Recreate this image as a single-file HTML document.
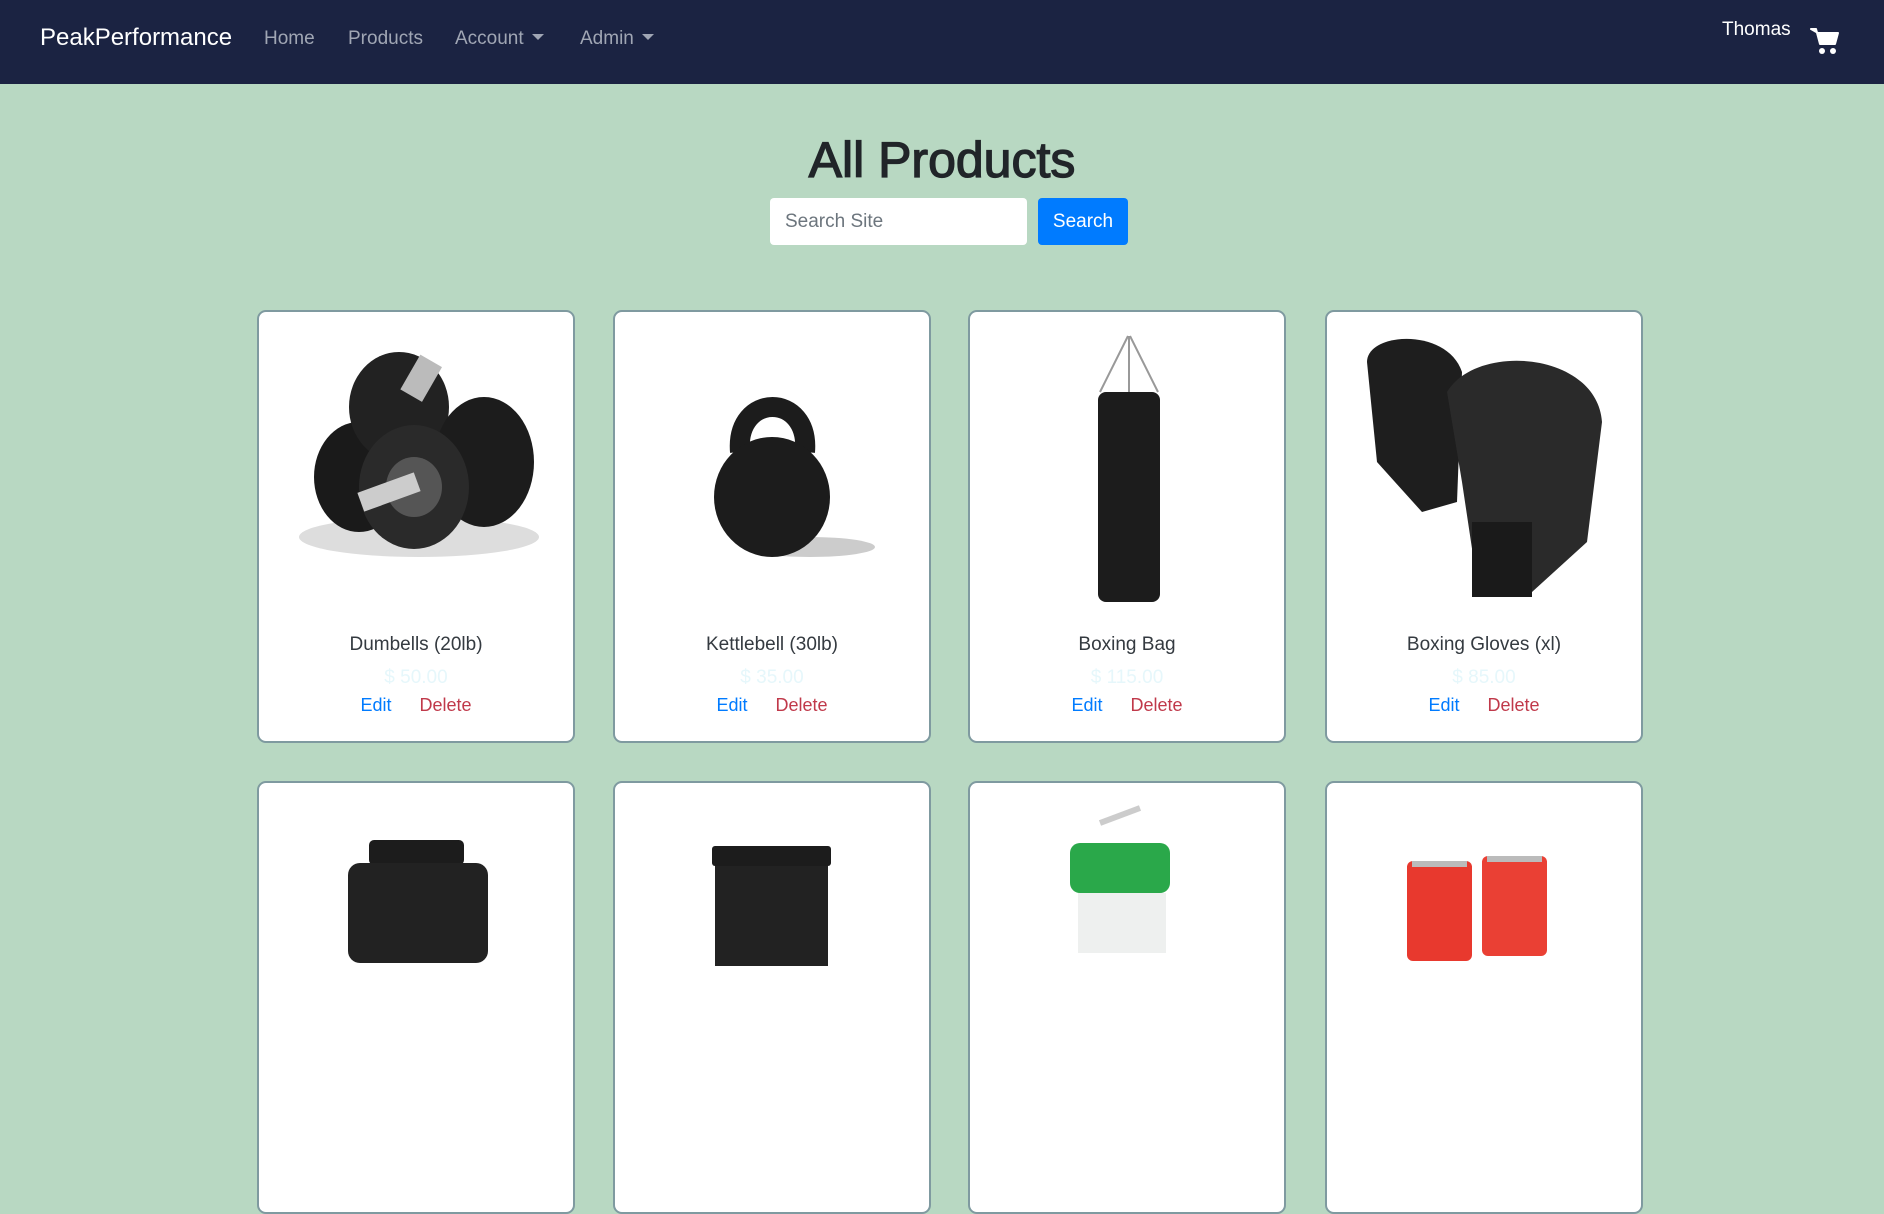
<!DOCTYPE html>
<html><head><meta charset="utf-8"><style>
*{box-sizing:border-box;margin:0;padding:0}
body{width:1884px;height:902px;overflow:hidden;background:#b8d8c2;font-family:"Liberation Sans",sans-serif;position:relative}
nav{position:absolute;left:0;top:0;width:1884px;height:84px;background:#1b2342}
.brand{position:absolute;left:40px;top:24px;font-size:24px;color:#fff}
.nl{position:absolute;top:28px;font-size:19px;color:#a0a6b4}
.car{display:inline-block;border-top:6px solid #a0a6b4;border-left:6px solid transparent;border-right:6px solid transparent;margin-left:8px;vertical-align:4px}
.th{position:absolute;left:1722px;top:19px;font-size:19px;color:#fff}
h1{position:absolute;left:0;width:1884px;top:130px;text-align:center;font-size:50px;font-weight:normal;-webkit-text-stroke:1.3px #212529;color:#212529;line-height:60px}
.inp{position:absolute;left:770px;top:198px;width:257px;height:47px;background:#fff;border-radius:4px;color:#6c757d;font-size:19px;padding:13px 15px}
.btn{position:absolute;left:1038px;top:198px;width:90px;height:47px;background:#007bff;border-radius:4px;color:#fff;font-size:19px;text-align:center;line-height:47px}
.card{position:absolute;width:318px;height:433px;background:#fff;border:2px solid #7f9aa0;border-radius:9px;overflow:hidden}
.card svg{position:absolute;left:0;top:0}
.nm{position:absolute;top:322px;width:100%;text-align:center;font-size:19px;color:#343a40}
.pr{position:absolute;top:355px;width:100%;text-align:center;font-size:19px;color:#e6f7fb}
.ed{position:absolute;top:383px;width:100%;text-align:center;font-size:18px}
.ed b{font-weight:normal;color:#007bff;margin-right:28px}.ed i{font-style:normal;color:#c0394a}
</style></head><body>
<nav>
<div class="brand">PeakPerformance</div>
<div class="nl" style="left:264px">Home</div>
<div class="nl" style="left:348px">Products</div>
<div class="nl" style="left:455px">Account<span class="car"></span></div>
<div class="nl" style="left:580px">Admin<span class="car"></span></div>
<div class="th">Thomas</div>
<svg style="position:absolute;left:1810px;top:27px" width="30" height="28" viewBox="0 0 30 28"><path d="M1 2h5l4 15h15l3-11H8z" fill="#fff" stroke="#fff" stroke-width="2" stroke-linejoin="round"/><circle cx="12" cy="24" r="3" fill="#fff"/><circle cx="23" cy="24" r="3" fill="#fff"/></svg>
</nav>
<h1>All Products</h1>
<div class="inp">Search Site</div>
<div class="btn">Search</div>

<div class="card" style="left:257px;top:310px">
<svg width="318" height="300"><ellipse cx="160" cy="225" rx="120" ry="20" fill="#ddd"/><ellipse cx="100" cy="165" rx="45" ry="55" fill="#1a1a1a"/><ellipse cx="140" cy="95" rx="50" ry="55" fill="#222"/><ellipse cx="225" cy="150" rx="50" ry="65" fill="#1c1c1c"/><ellipse cx="155" cy="175" rx="55" ry="62" fill="#2a2a2a"/><ellipse cx="155" cy="175" rx="28" ry="30" fill="#555"/><rect x="100" y="170" width="60" height="20" fill="#ccc" transform="rotate(-20 130 180)"/><rect x="150" y="45" width="25" height="40" fill="#bbb" transform="rotate(30 160 65)"/></svg>
<div class="nm">Dumbells (20lb)</div><div class="pr">$ 50.00</div><div class="ed"><b>Edit</b><i>Delete</i></div></div>

<div class="card" style="left:613px;top:310px">
<svg width="318" height="300"><ellipse cx="195" cy="235" rx="65" ry="10" fill="#ccc"/><path d="M125 140 C120 80 195 80 190 140" fill="none" stroke="#1c1c1c" stroke-width="20"/><ellipse cx="157" cy="185" rx="58" ry="60" fill="#1c1c1c"/></svg>
<div class="nm">Kettlebell (30lb)</div><div class="pr">$ 35.00</div><div class="ed"><b>Edit</b><i>Delete</i></div></div>

<div class="card" style="left:968px;top:310px">
<svg width="318" height="300"><path d="M158 24L130 80M160 24L188 80M159 24V80" stroke="#999" stroke-width="2"/><rect x="128" y="80" width="62" height="210" rx="8" fill="#1c1c1c"/></svg>
<div class="nm">Boxing Bag</div><div class="pr">$ 115.00</div><div class="ed"><b>Edit</b><i>Delete</i></div></div>

<div class="card" style="left:1325px;top:310px">
<svg width="318" height="300"><path d="M40 50 C40 20 120 15 135 60 L130 190 L95 200 L50 150 Z" fill="#1e1e1e"/><path d="M120 80 C150 30 270 40 275 110 L260 230 L205 280 L150 270 L135 170 Z" fill="#2a2a2a"/><rect x="145" y="210" width="60" height="75" fill="#1a1a1a"/></svg>
<div class="nm">Boxing Gloves (xl)</div><div class="pr">$ 85.00</div><div class="ed"><b>Edit</b><i>Delete</i></div></div>

<div class="card" style="left:257px;top:781px">
<svg width="318" height="300"><rect x="110" y="57" width="95" height="25" rx="5" fill="#1c1c1c"/><rect x="89" y="80" width="140" height="100" rx="12" fill="#222"/></svg></div>
<div class="card" style="left:613px;top:781px">
<svg width="318" height="300"><rect x="97" y="63" width="119" height="20" rx="3" fill="#1c1c1c"/><rect x="100" y="83" width="113" height="100" fill="#222"/></svg></div>
<div class="card" style="left:968px;top:781px">
<svg width="318" height="300"><path d="M130 40 L170 25" stroke="#ccc" stroke-width="6"/><rect x="100" y="60" width="100" height="50" rx="10" fill="#2aa84a"/><rect x="108" y="110" width="88" height="60" fill="#eef0ef"/></svg></div>
<div class="card" style="left:1325px;top:781px">
<svg width="318" height="300"><rect x="80" y="78" width="65" height="100" rx="6" fill="#e8392e"/><rect x="155" y="73" width="65" height="100" rx="6" fill="#ea4034"/><rect x="85" y="78" width="55" height="6" fill="#bbb"/><rect x="160" y="73" width="55" height="6" fill="#bbb"/></svg></div>
</body></html>
